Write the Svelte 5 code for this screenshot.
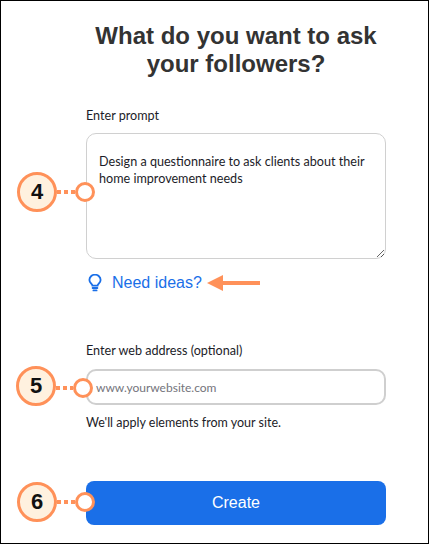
<script>
  let prompt = 'Design a questionnaire to ask clients about their home improvement needs';
  let url = '';

  const markers = [
    { n: 4, cls: 'm4' },
    { n: 5, cls: 'm5' },
    { n: 6, cls: 'm6' }
  ];
</script>

<div class="page">
  <h1>What do you want to ask<br />your followers?</h1>

  <label class="label" for="prompt">Enter prompt</label>
  <textarea id="prompt" bind:value={prompt}></textarea>

  <div class="ideas">
    <svg width="14" height="18" viewBox="0 0 14 18" fill="none" stroke="#1a6fe8" stroke-width="1.8" stroke-linecap="round">
      <path d="M4.4 11.6C4.2 10 1.4 8.8 1.4 5.900a5.600 5.200 0 0 1 11.200 0c0 2.900-2.800 4.100-3 5.700z" />
      <path d="M4.600 14h4.800M5.400 16.400h3.200" />
    </svg>
    <a href="#ideas">Need ideas?</a>
    <svg class="arrow" width="53" height="16" viewBox="0 0 53 16">
      <path d="M0 8 16 0v6h37v4H16v6z" fill="#ff9159" />
    </svg>
  </div>

  <label class="label web" for="url">Enter web address (optional)</label>
  <input id="url" placeholder="www.yourwebsite.com" bind:value={url} />
  <p class="help">We'll apply elements from your site.</p>

  <button type="button">Create</button>

  {#each markers as m}
    <div class="marker {m.cls}">
      <span class="badge">{m.n}</span>
      <span class="dots"></span>
      <span class="ring"></span>
    </div>
  {/each}
</div>

<style>
  :global(body) {
    margin: 0;
    background: #fff;
  }

  .page {
    position: relative;
    box-sizing: border-box;
    width: 429px;
    height: 544px;
    border: 1px solid #000;
    padding: 0 42px 0 85px;
    font-family: Lato, 'Liberation Sans', sans-serif;
    color: #1c1c28;
    overflow: hidden;
  }

  h1 {
    margin: 21px 0 0;
    font: bold 24px/28px 'Liberation Sans', sans-serif;
    color: #333;
    text-align: center;
  }

  .label {
    display: block;
    margin-top: 30px;
    font-size: 12.6px;
    line-height: 16px;
  }

  textarea {
    display: block;
    box-sizing: border-box;
    width: 300px;
    height: 126px;
    margin-top: 9px;
    padding: 19px 12px;
    border: 1px solid #d0d0d0;
    border-radius: 10px;
    font: 12.6px/17px Lato, 'Liberation Sans', sans-serif;
    color: #1c1c28;
    outline: none;
  }

  .ideas {
    display: flex;
    align-items: center;
    height: 24px;
    margin-top: 12px;
    padding-left: 2px;
  }

  .ideas a {
    margin-left: 10px;
    font: 16px 'Liberation Sans', sans-serif;
    color: #1a6fe8;
    text-decoration: none;
  }

  .arrow {
    margin-left: 5px;
  }

  .web {
    margin-top: 48px;
  }

  input {
    display: block;
    box-sizing: border-box;
    width: 300px;
    height: 36px;
    margin-top: 10px;
    padding: 0 8px;
    border: 2px solid #cfcfcf;
    border-radius: 10px;
    font: 12px Lato, 'Liberation Sans', sans-serif;
    outline: none;
  }

  input::placeholder {
    color: #74747c;
  }

  .help {
    margin: 10px 0 0;
    font-size: 12.5px;
    line-height: 16px;
  }

  button {
    display: block;
    width: 300px;
    height: 44px;
    margin-top: 50px;
    border: 0;
    border-radius: 8px;
    background: #1a6fe8;
    color: #fff;
    font: 16px 'Liberation Sans', sans-serif;
  }

  .marker {
    position: absolute;
    left: 16px;
    display: flex;
    align-items: center;
  }

  .m4 { top: 171px; }
  .m5 { top: 365px; left: 15px; }
  .m6 { top: 481px; }

  .badge {
    box-sizing: border-box;
    display: flex;
    align-items: center;
    justify-content: center;
    width: 40px;
    height: 40px;
    border: 3px solid #ff9159;
    border-radius: 50%;
    background: #fff1df;
    color: #111;
    font: bold 22px 'Liberation Sans', sans-serif;
  }

  .dots {
    width: 18px;
    height: 4px;
    background: repeating-linear-gradient(90deg, #ff9159 0 4px, transparent 4px 7px);
  }

  .m5 .dots {
    width: 17px;
    margin-top: 3px;
  }

  .m5 .ring {
    margin-top: 3px;
  }

  .ring {
    box-sizing: border-box;
    width: 20px;
    height: 20px;
    border: 3px solid #ff9159;
    border-radius: 50%;
    background: #fff;
  }
</style>
